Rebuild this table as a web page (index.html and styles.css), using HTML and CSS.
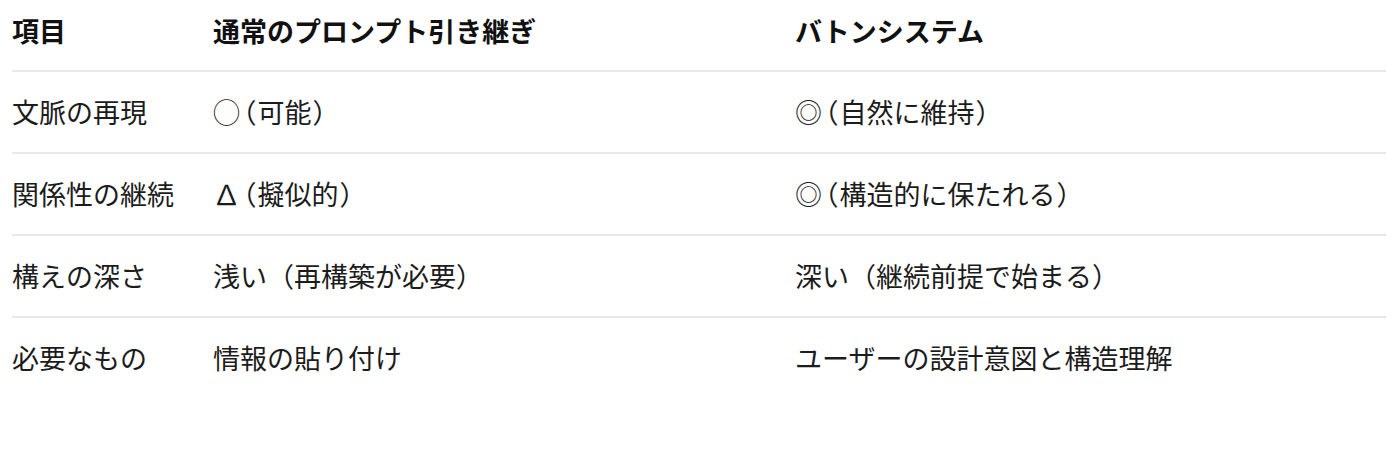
FILE: index.html
```html
<!DOCTYPE html>
<html lang="ja">
<head>
<meta charset="utf-8">
<link rel="stylesheet" href="styles.css">
</head>
<body>
<div class="table">
  <div class="row head">
    <div class="cell">項目</div>
    <div class="cell">通常のプロンプト引き継ぎ</div>
    <div class="cell">バトンシステム</div>
  </div>
  <div class="row">
    <div class="cell">文脈の再現</div>
    <div class="cell">◯<span class="pp">（</span>可能<span class="pp">）</span></div>
    <div class="cell">◎<span class="pp">（</span>自然に維持<span class="pp">）</span></div>
  </div>
  <div class="row">
    <div class="cell">関係性の継続</div>
    <div class="cell">∆<span class="pp">（</span>擬似的<span class="pp">）</span></div>
    <div class="cell">◎<span class="pp">（</span>構造的に保たれる<span class="pp">）</span></div>
  </div>
  <div class="row">
    <div class="cell">構えの深さ</div>
    <div class="cell">浅い（再構築が必要）</div>
    <div class="cell">深い（継続前提で始まる）</div>
  </div>
  <div class="row last">
    <div class="cell">必要なもの</div>
    <div class="cell">情報の貼り付け</div>
    <div class="cell">ユーザーの設計意図と構造理解</div>
  </div>
</div>
</body>
</html>
```

FILE: styles.css
```css
html, body {
  margin: 0;
  padding: 0;
  background: #ffffff;
}
body {
  font-family: "Noto Sans CJK JP", "Noto Sans", sans-serif;
  font-size: 27px;
  color: #1c1c1c;
}
.table {
  margin-left: 12px;
  width: 1374px;
}
.row {
  display: grid;
  grid-template-columns: 201px 582px 1fr;
  align-items: center;
  height: 80px;
  border-bottom: 2px solid #e8e8e8;
  line-height: 1.2;
}
.row.head {
  height: 62px;
  padding-bottom: 8px;
  font-weight: 700;
  color: #111111;
}
.row.last {
  border-bottom: none;
}
.cell {
  white-space: nowrap;
}
.pp {
  font-feature-settings: "palt" 1;
  padding: 0 2px;
}
```
